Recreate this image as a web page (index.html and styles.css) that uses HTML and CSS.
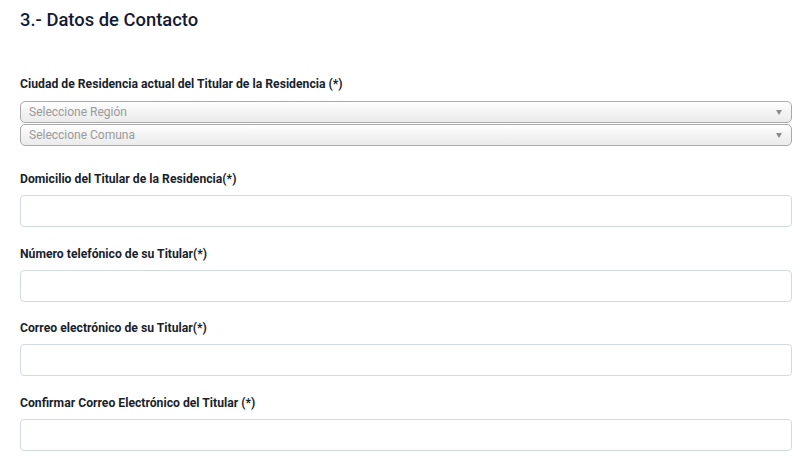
FILE: index.html
```html
<!DOCTYPE html>
<html lang="es">
<head>
<meta charset="utf-8">
<title>Datos de Contacto</title>
<link rel="stylesheet" href="styles.css">
</head>
<body>
<main class="page">
  <h1 class="title">3.- Datos de Contacto</h1>

  <section class="group group-city">
    <div class="label">Ciudad de Residencia actual del Titular de la Residencia (*)</div>
    <div class="select"><span class="select-text">Seleccione Región</span><span class="arrow"></span></div>
    <div class="select"><span class="select-text">Seleccione Comuna</span><span class="arrow"></span></div>
  </section>

  <section class="group">
    <div class="label">Domicilio del Titular de la Residencia(*)</div>
    <div class="input"></div>
  </section>

  <section class="group">
    <div class="label">Número telefónico de su Titular(*)</div>
    <div class="input"></div>
  </section>

  <section class="group">
    <div class="label">Correo electrónico de su Titular(*)</div>
    <div class="input"></div>
  </section>

  <section class="group">
    <div class="label">Confirmar Correo Electrónico del Titular (*)</div>
    <div class="input"></div>
  </section>
</main>
</body>
</html>
```

FILE: styles.css
```css
html, body {
  margin: 0;
  padding: 0;
  background: #ffffff;
}

body {
  font-family: Roboto, "Liberation Sans", Arial, sans-serif;
  color: #1b2030;
}

.page {
  padding: 9px 8px 0 20px;
  display: flex;
  flex-direction: column;
}

.title {
  margin: 0 0 45px 0;
  font-size: 18.4px;
  line-height: 22px;
  font-weight: 500;
  color: #121b33;
}

.group {
  display: flex;
  flex-direction: column;
  margin-bottom: 18.67px;
}

.group-city {
  margin-bottom: 24px;
}

.label {
  font-size: 12.2px;
  line-height: 16px;
  font-weight: 700;
  color: #1a1f2c;
  margin-bottom: 8px;
}

.group-city .label {
  margin-bottom: 9px;
}

.select {
  height: 22px;
  box-sizing: border-box;
  border: 1px solid #a9a9a9;
  border-radius: 5px;
  background: linear-gradient(#ffffff 0%, #f3f3f3 50%, #ebebeb 100%);
  display: flex;
  align-items: center;
  justify-content: space-between;
  padding: 0 9px 0 8px;
  margin-bottom: 1px;
}

.select-text {
  font-size: 12px;
  color: #9a9a9a;
}

.arrow {
  width: 0;
  height: 0;
  border-left: 3px solid transparent;
  border-right: 3px solid transparent;
  border-top: 5px solid #8a8a8a;
}

.input {
  height: 32px;
  box-sizing: border-box;
  border: 1px solid #d3d9e1;
  border-radius: 4px;
  background: #ffffff;
}
```
